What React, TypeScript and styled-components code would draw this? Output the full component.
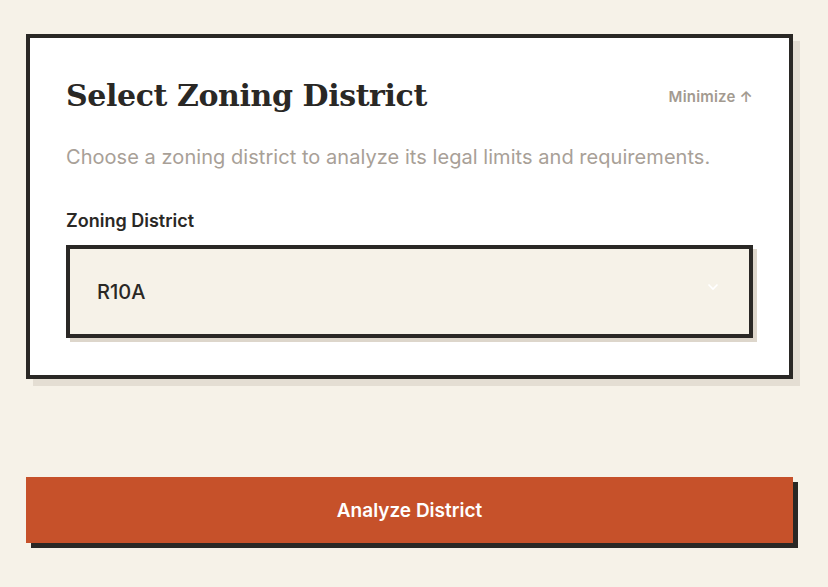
import styled, { createGlobalStyle } from "styled-components";

const GlobalStyle = createGlobalStyle`
  html, body {
    margin: 0;
    padding: 0;
    background: #f6f2e8;
  }
  body {
    font-family: Inter, "Noto Sans", sans-serif;
    color: #2a2825;
  }
`;

const Page = styled.div`
  padding: 34px 35px 40px 26px;
  display: flex;
  flex-direction: column;
  gap: 98px;
`;

const Card = styled.section`
  background: #ffffff;
  border: 4px solid #2a2825;
  box-shadow: 7px 7px 0 #e4ded3;
  padding: 37px 36px 37px 36px;
`;

const Header = styled.div`
  display: flex;
  align-items: center;
  justify-content: space-between;
`;

const Title = styled.h1`
  margin: 0;
  font-family: "DejaVu Serif", "Liberation Serif", serif;
  font-weight: 700;
  font-size: 30px;
  line-height: 42px;
  letter-spacing: -0.4px;
  color: #2a2825;
`;

const MinimizeButton = styled.button`
  border: none;
  background: none;
  padding: 0;
  font-family: Inter, sans-serif;
  font-size: 15px;
  font-weight: 600;
  letter-spacing: 0.2px;
  color: #a39a90;
  cursor: pointer;
`;

const Description = styled.p`
  margin: 26px 0 0;
  font-size: 20px;
  line-height: 28px;
  letter-spacing: 0.05px;
  color: #a8a097;
`;

const Label = styled.label`
  display: block;
  margin: 39px 0 13px;
  font-size: 18px;
  font-weight: 600;
  line-height: 22px;
  color: #2a2825;
`;

const SelectBox = styled.div`
  position: relative;
  height: 85px;
  border: 4px solid #2a2825;
  background: #f6f2e8;
  box-shadow: 4px 4px 0 #ddd6cb;
  display: flex;
  align-items: center;
  padding: 0 27px;
  font-size: 20px;
  font-weight: 500;
  color: #2a2825;
`;

const Chevron = styled.svg`
  position: absolute;
  right: 30px;
  top: 34px;
`;

const AnalyzeButton = styled.button`
  height: 66px;
  border: none;
  background: #c6512a;
  box-shadow: 5px 5px 0 #2a2825;
  color: #ffffff;
  font-family: Inter, sans-serif;
  font-size: 19px;
  font-weight: 600;
  cursor: pointer;
`;

export default function App() {
  return (
    <>
      <GlobalStyle />
      <Page>
        <Card>
          <Header>
            <Title>Select Zoning District</Title>
            <MinimizeButton>Minimize ↑</MinimizeButton>
          </Header>
          <Description>
            Choose a zoning district to analyze its legal limits and requirements.
          </Description>
          <Label>Zoning District</Label>
          <SelectBox>
            R10A
            <Chevron width="12" height="8" viewBox="0 0 12 8" fill="none">
              <polyline points="1.5,1.5 6,6 10.5,1.5" stroke="#ffffff" strokeWidth="1.6" />
            </Chevron>
          </SelectBox>
        </Card>
        <AnalyzeButton>Analyze District</AnalyzeButton>
      </Page>
    </>
  );
}
